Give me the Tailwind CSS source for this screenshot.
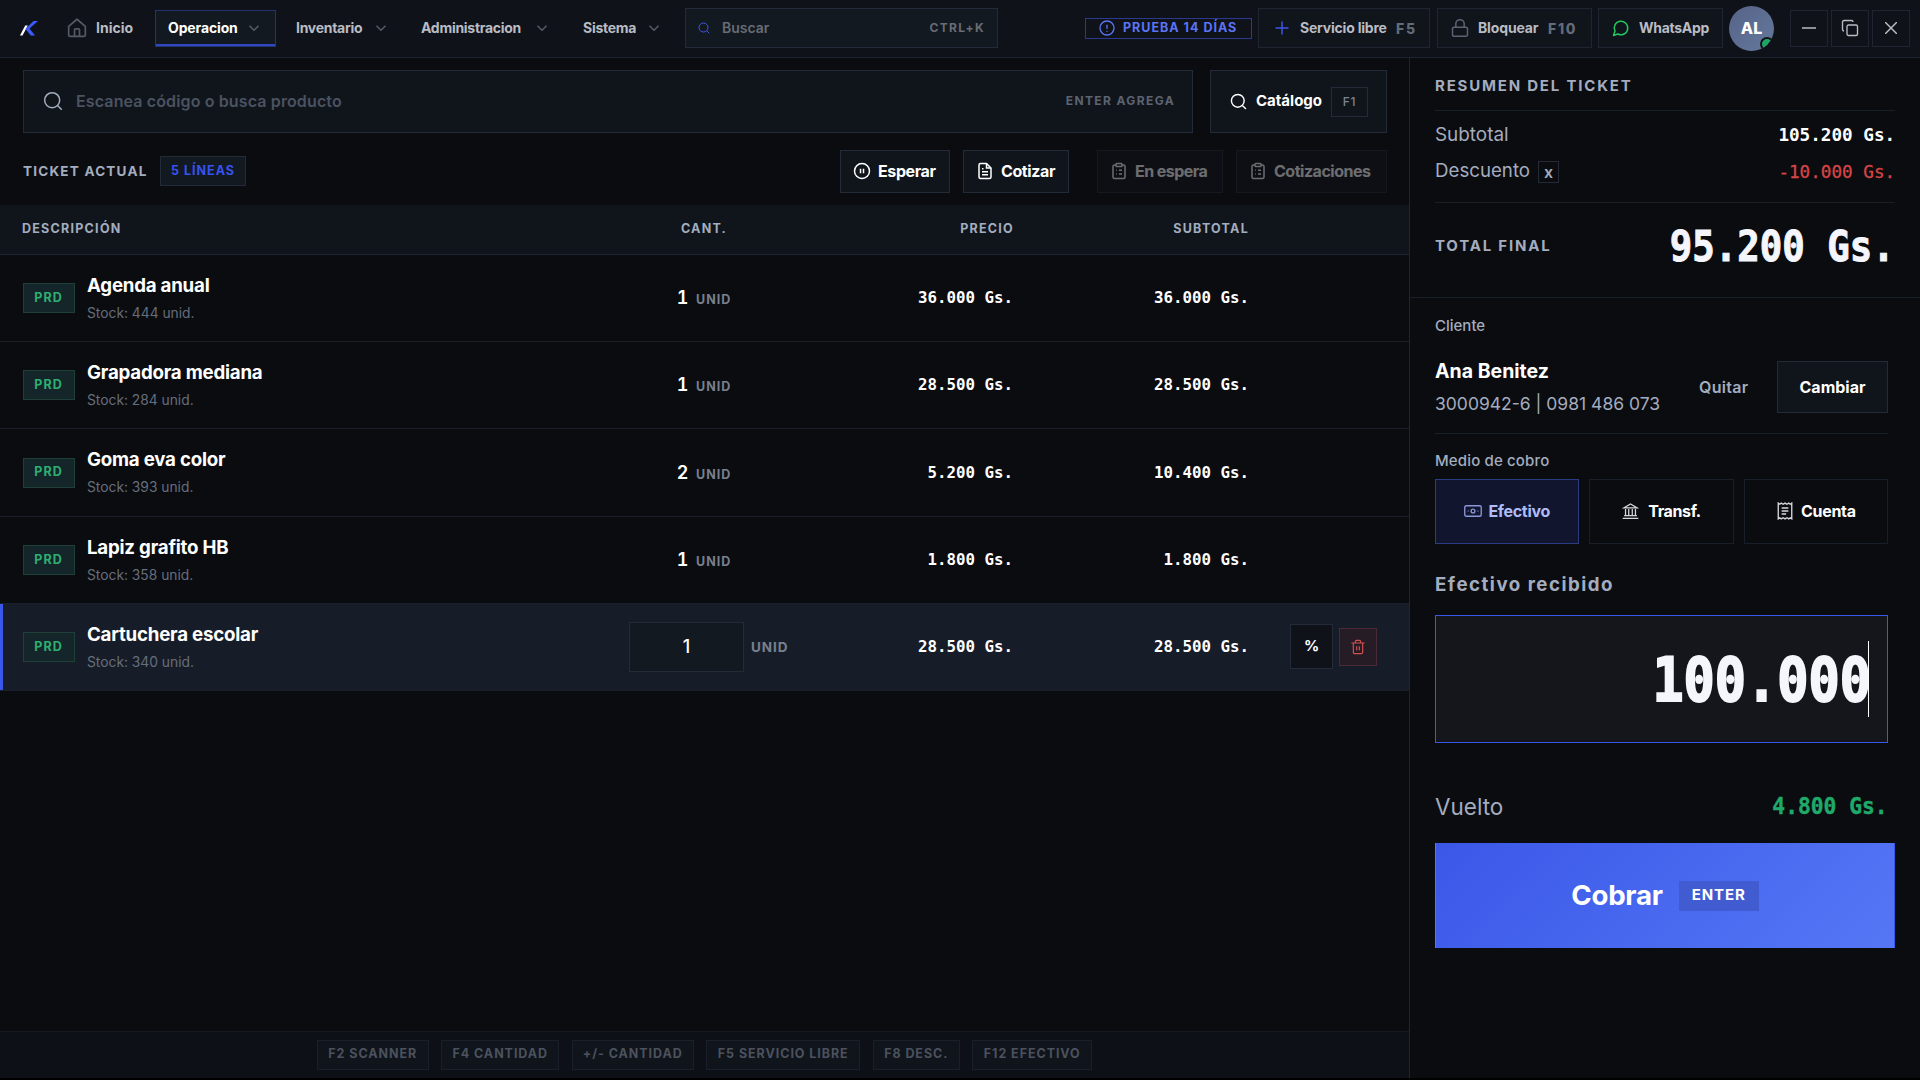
<!DOCTYPE html>
<html lang="es">
<head>
<meta charset="utf-8">
<title>Punto de venta</title>
<script src="https://cdn.jsdelivr.net/npm/@tailwindcss/browser@4"></script>
</head>
<body class="w-[1920px] h-[1080px] overflow-hidden bg-black text-white font-['Inter',sans-serif]">
<svg class="hidden">
  <defs>
    <symbol id="chev" viewBox="0 0 24 24"><path d="m6 9 6 6 6-6"/></symbol>
    <symbol id="search" viewBox="0 0 24 24"><circle cx="11" cy="11" r="9"/><path d="m22.500 22.500-5-5"/></symbol>
    <symbol id="clip" viewBox="0 0 24 24"><rect x="8" y="2" width="8" height="4" rx="1"/><path d="M16 4h2a2 2 0 0 1 2 2v14a2 2 0 0 1-2 2H6a2 2 0 0 1-2-2V6a2 2 0 0 1 2-2h2M12 11h4M12 16h4M8 11h1M8 16h1"/></symbol>
  </defs>
</svg>
<div class="flex flex-col h-[1078px] bg-[#0b0c10]">
  <header class="flex items-center h-[58px] pb-px shrink-0 border-b border-[#1e2531] bg-[#0f1219] text-sm font-semibold text-[#b9bcc3]">
    <svg class="ml-5 w-[18px] h-[15px] shrink-0" viewBox="0 0 18 15"><path d="M0 14.5 5.2 4.500h2.600L2.500 14.500z" fill="#fff"/><path d="M13.500 0H18L9.500 7.600l5.500 6.900h-4.200L5.500 8z" fill="#3b5bfd"/></svg>
    <div class="flex items-center ml-[29px] w-[88px] shrink-0">
      <svg class="w-5 h-5 mr-[9px]" fill="none" stroke="#545b67" stroke-width="2" stroke-linecap="round" stroke-linejoin="round" viewBox="0 0 24 24"><path d="M2 10 12 1.500 22 10v10a2 2 0 0 1-2 2H4a2 2 0 0 1-2-2z"/><path d="M9 22v-8a1 1 0 0 1 1-1h4a1 1 0 0 1 1 1v8"/></svg>
      <span class="font-bold">Inicio</span>
    </div>
    <div class="flex items-center justify-between w-[121px] h-[37px] pl-3 pr-3 shrink-0 border border-[#25336f] bg-[#131920] text-white tracking-[-.01em] font-bold shadow-[inset_0_-2px_0_#3047c0]">Operacion<svg class="w-[18px] h-[18px]" fill="none" stroke="#565d69" stroke-width="2"><use href="#chev"/></svg></div>
    <div class="flex items-center justify-between w-[94px] ml-5 shrink-0 font-bold tracking-[-.02em]">Inventario<svg class="w-[18px] h-[18px]" fill="none" stroke="#565d69" stroke-width="2"><use href="#chev"/></svg></div>
    <div class="flex items-center justify-between w-[130px] ml-[31px] shrink-0 font-bold tracking-[-.02em]">Administracion<svg class="w-[18px] h-[18px]" fill="none" stroke="#565d69" stroke-width="2"><use href="#chev"/></svg></div>
    <div class="flex items-center justify-between w-20 ml-8 shrink-0 font-bold tracking-[-.02em]">Sistema<svg class="w-[18px] h-[18px]" fill="none" stroke="#565d69" stroke-width="2"><use href="#chev"/></svg></div>
    <div class="flex items-center w-[313px] h-10 ml-[22px] px-3 shrink-0 border border-[#232b3a] bg-[#131920]">
      <svg class="w-[12px] h-[12px] mr-3" fill="none" stroke="#3b57e8" stroke-width="2"><use href="#search"/></svg>
      <span class="text-[#676c76]">Buscar</span>
      <span class="ml-auto text-xs font-bold tracking-[.11em] text-[#676c76]">CTRL+K</span>
    </div>
    <div class="flex items-center w-[167px] h-[21px] ml-[87px] pl-[13px] shrink-0 border border-[#2a3a8c] text-[#5b74f5] text-[12.5px] font-bold tracking-[.08em] whitespace-nowrap">
      <svg class="w-4 h-4 mr-2" fill="none" stroke="currentColor" stroke-width="2" viewBox="0 0 24 24"><circle cx="12" cy="12" r="10.500"/><path d="M12 7v6M12 16v1.500"/></svg>PRUEBA 14 DÍAS
    </div>
    <div class="flex items-center w-[172px] h-10 ml-[6px] pl-4 shrink-0 border border-[#1e2531] bg-[#10141b] whitespace-nowrap">
      <svg class="w-[14px] h-[14px] mr-[11px]" fill="none" stroke="#3b57e8" stroke-width="1.500" viewBox="0 0 14 14"><path d="M7 .5v13M.5 7h13"/></svg><span class="w-[96px] font-bold tracking-[-.015em]">Servicio libre</span><span class="mt-px text-[#646b78] font-extrabold tracking-[.12em]">F5</span>
    </div>
    <div class="flex items-center w-[155px] h-10 ml-[7px] pl-3 shrink-0 border border-[#1e2531] bg-[#10141b] whitespace-nowrap">
      <svg class="w-5 h-5 mr-2" fill="none" stroke="#5c6370" stroke-width="1.800" viewBox="0 0 24 24"><rect x="3" y="11" width="18" height="11" rx="2"/><path d="M7 11V7a5 5 0 0 1 10 0v4"/></svg><span class="w-[70px] font-bold tracking-[-.01em]">Bloquear</span><span class="mt-px text-[#646b78] font-extrabold tracking-[.12em]">F10</span>
    </div>
    <div class="flex items-center w-[125px] h-10 ml-[6px] pl-[13px] shrink-0 border border-[#1e2531] bg-[#10141b] font-bold tracking-[-.02em] whitespace-nowrap">
      <svg class="w-[18px] h-[18px] mr-[9px]" fill="none" stroke="#22c55e" stroke-width="2" stroke-linecap="round" stroke-linejoin="round" viewBox="0 0 24 24"><path d="M7.900 20A9 9 0 1 0 4 16.100L2 22Z"/></svg>WhatsApp
    </div>
    <div class="relative flex items-center justify-center w-[45px] h-[45px] ml-[6px] shrink-0 rounded-full overflow-hidden bg-linear-135 from-[#566488] to-[#64789c] text-white text-base font-extrabold">AL<span class="absolute left-[31px] top-[31px] w-[14px] h-[14px] rounded-full border-2 border-[#0f1219] bg-[#1fa463]"></span></div>
    <div class="flex items-center ml-4 gap-[3px]">
      <div class="grid place-items-center w-[38px] h-[37px] border border-[#1e2531]"><svg class="w-4 h-4" fill="none" stroke="#b9bcc3" stroke-width="1.500" viewBox="0 0 16 16"><path d="M1 8h14"/></svg></div>
      <div class="grid place-items-center w-[38px] h-[37px] border border-[#1e2531]"><svg class="w-[18px] h-[18px]" fill="none" stroke="#b9bcc3" stroke-width="1.800" viewBox="0 0 24 24"><rect x="8" y="8" width="14" height="14" rx="2"/><path d="M4 16a2 2 0 0 1-2-2V4a2 2 0 0 1 2-2h10a2 2 0 0 1 2 2"/></svg></div>
      <div class="grid place-items-center w-[38px] h-[37px] border border-[#1e2531]"><svg class="w-3 h-3" fill="none" stroke="#b9bcc3" stroke-width="1.500" viewBox="0 0 12 12"><path d="m0 0 12 12M12 0 0 12"/></svg></div>
    </div>
  </header>

  <div class="flex flex-1 min-h-0">
    <main class="flex flex-col w-[1409px] shrink-0">
      <div class="flex pt-3 pl-[23px] gap-[17px]">
        <div class="flex items-center w-[1170px] h-[63px] pl-[19px] pr-[17px] pb-px border border-[#232b38] bg-[#10151c]">
          <svg class="w-[20px] h-[20px] mr-[13px]" fill="none" stroke="#a3adbf" stroke-width="1.800"><use href="#search"/></svg>
          <span class="text-base font-semibold tracking-[.008em] text-[#4b5260]">Escanea código o busca producto</span>
          <span class="ml-auto text-xs font-bold tracking-[.115em] text-[#5c6371]">ENTER AGREGA</span>
        </div>
        <div class="flex items-center w-[177px] h-[63px] pl-[19px] border border-[#232b38] bg-[#10151c] text-base font-semibold">
          <svg class="w-[17px] h-[17px] mr-[9px]" fill="none" stroke="#fff" stroke-width="2"><use href="#search"/></svg><span class="w-[75px] text-[15px] font-bold">Catálogo</span>
          <span class="grid place-items-center w-[37px] h-[30px] border border-[#232b38] text-xs font-medium tracking-[.05em] text-[#7b8494]">F1</span>
        </div>
      </div>
      <div class="flex items-center h-[43px] mt-[17px] pl-[23px]">
        <span class="w-[137px] text-[13.5px] font-bold tracking-[.09em] text-[#a3adbf]">TICKET ACTUAL</span>
        <span class="grid place-items-center w-[86px] h-[30px] mb-px border border-[#232b38] bg-[#131920] text-[12.5px] font-bold tracking-[.08em] text-[#3553f0]">5 LÍNEAS</span>
        <div class="flex ml-[594px] text-base font-semibold">
          <div class="flex items-center w-[110px] h-[43px] pl-3 pb-px border border-[#232b38] bg-[#10151c]"><svg class="w-[18px] h-[18px] mr-[7px]" fill="none" stroke="#fff" stroke-width="2" viewBox="0 0 24 24"><circle cx="12" cy="12" r="10"/><path d="M10 9v6M14 9v6"/></svg><span class="font-bold tracking-[-.025em]">Esperar</span></div>
          <div class="flex items-center w-[106px] h-[43px] ml-[13px] pl-3 pb-px border border-[#232b38] bg-[#10151c]"><svg class="w-[18px] h-[18px] mr-[7px]" fill="none" stroke="#fff" stroke-width="2" viewBox="0 0 24 24"><path d="M14 2H6a2 2 0 0 0-2 2v16a2 2 0 0 0 2 2h12a2 2 0 0 0 2-2V8z"/><path d="M14 2v6h6M8 9h2M8 13h8M8 17h8"/></svg><span class="font-bold tracking-[-.025em]">Cotizar</span></div>
          <div class="flex items-center w-[126px] h-[43px] ml-7 pl-3 pb-px border border-[#232b38] bg-[#10151c] opacity-40"><svg class="w-[18px] h-[18px] mr-[7px]" fill="none" stroke="#fff" stroke-width="2"><use href="#clip"/></svg><span class="font-bold tracking-[-.035em]">En espera</span></div>
          <div class="flex items-center w-[151px] h-[43px] ml-[13px] pl-3 pb-px border border-[#232b38] bg-[#10151c] opacity-40"><svg class="w-[18px] h-[18px] mr-[7px]" fill="none" stroke="#fff" stroke-width="2"><use href="#clip"/></svg><span class="font-bold tracking-[-.03em]">Cotizaciones</span></div>
        </div>
      </div>
      <div class="flex items-center h-[50px] mt-3 pl-[22px] pb-px shrink-0 border-b border-[#1e2531] bg-[#10151c] text-[12.5px] font-bold tracking-[.1em] text-[#a3adbf]">
        <span class="w-[608px]">DESCRIPCIÓN</span><span class="w-[148px] text-center">CANT.</span><span class="w-[236px] text-right">PRECIO</span><span class="w-[235px] text-right">SUBTOTAL</span>
      </div>
      <div id="rows"></div>
      <footer class="flex items-center justify-center h-[47px] mt-auto pb-px border-t border-[#141922] bg-[#0d1017] gap-[12.500px] text-[12.5px] font-bold tracking-[.075em] text-[#4b525e]">
        <span class="grid place-items-center w-[112px] h-[30px] border border-[#1a202a] bg-[#10141b]">F2 SCANNER</span>
        <span class="grid place-items-center w-[118px] h-[30px] border border-[#1a202a] bg-[#10141b]">F4 CANTIDAD</span>
        <span class="grid place-items-center w-[122px] h-[30px] border border-[#1a202a] bg-[#10141b]">+/- CANTIDAD</span>
        <span class="grid place-items-center w-[154px] h-[30px] border border-[#1a202a] bg-[#10141b]">F5 SERVICIO LIBRE</span>
        <span class="grid place-items-center w-[87px] h-[30px] border border-[#1a202a] bg-[#10141b]">F8 DESC.</span>
        <span class="grid place-items-center w-[120px] h-[30px] border border-[#1a202a] bg-[#10141b]">F12 EFECTIVO</span>
      </footer>
    </main>

    <aside class="flex-1 border-l border-[#1e2531] text-[#a3adbf]">
      <div class="h-[240px] pl-[25px] pr-[25px] border-b border-[#191f29]">
        <div class="flex items-center h-[53px] pt-1 border-b border-[#191f29] text-[15px] font-bold tracking-[.12em]">RESUMEN DEL TICKET</div>
        <div class="flex items-center justify-between h-[48px] text-[18.9px]">Subtotal<span class="font-['DejaVu_Sans_Mono',monospace] font-bold text-lg text-white origin-right scale-x-[.98]">105.200 Gs.</span></div>
        <div class="flex items-center h-[25px] text-[18.7px]">Descuento<span class="grid place-items-center w-[21px] h-[22px] ml-2 border border-[#232b38] text-base leading-4 font-semibold">x</span><span class="ml-auto font-['DejaVu_Sans_Mono',monospace] text-lg text-[#d64545] [-webkit-text-stroke:.3px_#d64545] origin-right scale-x-[.98]">-10.000 Gs.</span></div>
        <div class="flex items-center justify-between h-[87px] mt-[18px] border-t border-[#191f29]"><span class="text-[15px] font-bold tracking-[.12em]">TOTAL FINAL</span><span class="font-['DejaVu_Sans_Mono',monospace] font-bold text-[42px] text-[#f4f6fc] [-webkit-text-stroke:1px_#f4f6fc] origin-right scale-x-[.89]">95.200 Gs.</span></div>
      </div>
      <div class="pl-[25px] pr-8">
        <div class="h-[55px] pt-4 text-[15px] leading-6 font-medium">Cliente</div>
        <div class="flex items-center h-[81px] border-b border-[#191f29] pb-3">
          <div class="w-[264px] whitespace-nowrap"><div class="text-[19.5px] leading-8 font-bold text-white">Ana Benitez</div><div class="pt-px text-[17.500px] leading-8">3000942-6 | 0981 486 073</div></div>
          <span class="w-[78px] text-base font-semibold tracking-[.02em]">Quitar</span>
          <span class="grid place-items-center w-[111px] h-[52px] border border-[#232b38] bg-[#10151c] text-base font-bold text-white">Cambiar</span>
        </div>
        <div class="h-[45px] pt-[15px] text-[15px] leading-6 font-medium tracking-[.01em]">Medio de cobro</div>
        <div class="grid grid-cols-3 gap-[10px] h-[65px] text-base font-semibold text-white">
          <div class="flex items-center justify-center gap-[6px] pb-px border border-[#2b3c82] bg-[#11162e] text-[#b0bcf8]"><svg class="w-[18px] h-[18px]" fill="none" stroke="#8b97d8" stroke-width="1.800" viewBox="0 0 24 24"><rect x="1" y="5" width="22" height="14" rx="2"/><circle cx="12" cy="12" r="2.500"/><path d="M5 12h1M18 12h1"/></svg><span class="font-bold tracking-[-.02em]">Efectivo</span></div>
          <div class="flex items-center justify-center gap-[9px] pb-px border border-[#191f29]"><svg class="w-[17px] h-[18px]" fill="none" stroke="#d5d7dc" stroke-width="1.800" viewBox="0 0 24 24"><path d="M1 22.500h22M3 18.500h18M5 9v9M9.500 9v9M14.500 9v9M19 9v9M3 7.500h18L12 2z"/></svg><span class="font-bold tracking-[-.025em]">Transf.</span></div>
          <div class="flex items-center justify-center gap-[7px] pb-px border border-[#191f29]"><svg class="w-[18px] h-[18px]" fill="none" stroke="#d5d7dc" stroke-width="1.800" viewBox="0 0 24 24"><path d="M3 1.500l2 1.500 2-1.500L9.500 3 12 1.500 14.500 3 17 1.500 19 3l2-1.500v21L19 21l-2 1.500-2.500-1.500-2.500 1.500L9.500 21 7 22.500 5 21l-2 1.500zM7.500 8h9M7.500 12h9M7.500 16h6"/></svg><span class="font-bold tracking-[-.02em]">Cuenta</span></div>
        </div>
        <div class="h-[71px] pt-[25px] text-[18.700px] leading-8 font-bold tracking-[.08em]">Efectivo recibido</div>
        <div class="relative flex items-center justify-end h-[128px] pr-[16px] pt-[2px] border border-[#3b57e8] bg-[#15161b] font-['DejaVu_Sans_Mono',monospace] font-bold text-[60px] text-[#f4f6fc]"><span class="[-webkit-text-stroke:2px_#f4f6fc] origin-right scale-x-[.864]">100.000</span><span class="absolute left-[432px] top-[25px] w-px h-[76px] bg-white"></span></div>
        <div class="flex items-center justify-between h-[100px] pt-[27px] text-[22.500px]">Vuelto<span class="font-['DejaVu_Sans_Mono',monospace] font-bold text-[23px] text-[#1fa96a] [-webkit-text-stroke:.4px_#1fa96a] origin-right scale-x-[.925]">4.800 Gs.</span></div>
      </div>
      <div class="flex items-center justify-center w-[460px] h-[105px] ml-[25px] border-x border-l-[#5577f5] border-r-[#3b57e8] bg-linear-135 from-[#3b57e8] to-[#5577f5] text-[27.700px] font-bold tracking-[-.01em] text-white">Cobrar<span class="grid place-items-center w-20 h-[30px] ml-4 bg-[#415bd1] text-[15px] font-bold tracking-[.06em]">ENTER</span></div>
    </aside>
  </div>
</div>
<script>
const rows = [
  ['Agenda anual', 444, 1, '36.000', '36.000', 'h-[87px]'],
  ['Grapadora mediana', 284, 1, '28.500', '28.500', 'h-[87px]'],
  ['Goma eva color', 393, 2, '5.200', '10.400', 'h-[88px]'],
  ['Lapiz grafito HB', 358, 1, '1.800', '1.800', 'h-[87px]'],
  ['Cartuchera escolar', 340, 1, '28.500', '28.500', 'h-[87px]']
];
document.getElementById('rows').innerHTML = rows.map(([n, s, q, p, t, h], i) => {
  const on = i === 4;
  return `<div class="flex items-center pl-[23px] border-b border-[#191f29] ${h} ${on ? 'bg-[#171d28] shadow-[inset_3px_0_0_#3b57e8]' : ''}">
    <span class="grid place-items-center w-[52px] h-[30px] pr-px border border-[#1f4038] bg-[#14262a] text-[12.500px] font-bold tracking-[.08em] text-[#2fae72]">PRD</span>
    <div class="w-[542px] ml-3 mt-[2px]"><div class="text-[18.700px] leading-[27px] font-bold tracking-[-.012em]">${n}</div><div class="pt-px text-[13.800px] leading-[27px] text-[#666e7d]">Stock: ${s} unid.</div></div>
    ${on
      ? `<div class="flex items-center w-[166px]"><span class="grid place-items-center w-[115px] h-[50px] border border-[#232b38] bg-[#131920] font-medium text-lg">${q}</span><span class="ml-[7px] text-[13.500px] font-bold tracking-[.07em] text-[#78808f]">UNID</span></div>`
      : `<div class="flex items-baseline w-[166px] pl-[47px]"><span class="w-[13px] text-center tabular-nums font-semibold text-lg">${q}</span><span class="ml-[7px] text-[12.500px] font-bold tracking-[.08em] text-[#78808f]">UNID</span></div>`}
    <span class="w-[218px] text-right font-['DejaVu_Sans_Mono',monospace] font-bold text-base origin-right scale-x-[.985]">${p} Gs.</span>
    <span class="w-[236px] text-right font-['DejaVu_Sans_Mono',monospace] font-bold text-base origin-right scale-x-[.985]">${t} Gs.</span>
    ${on ? `<span class="grid place-items-center w-[43px] h-[45px] ml-[41px] mb-px border border-[#232b38] bg-[#0f1319] text-[15px] font-bold">%</span>
    <span class="grid place-items-center w-[38px] h-[38px] ml-[6px] border border-[#4a2b35] bg-[#261c26]"><svg class="w-4 h-4" fill="none" stroke="#d0504f" stroke-width="1.800" viewBox="0 0 24 24"><path d="M2 6h20M19 6v14a2 2 0 0 1-2 2H7a2 2 0 0 1-2-2V6M8 6V4a2 2 0 0 1 2-2h4a2 2 0 0 1 2 2v2M10 11v6M14 11v6"/></svg></span>` : ''}
  </div>`;
}).join('');
</script>
</body>
</html>
